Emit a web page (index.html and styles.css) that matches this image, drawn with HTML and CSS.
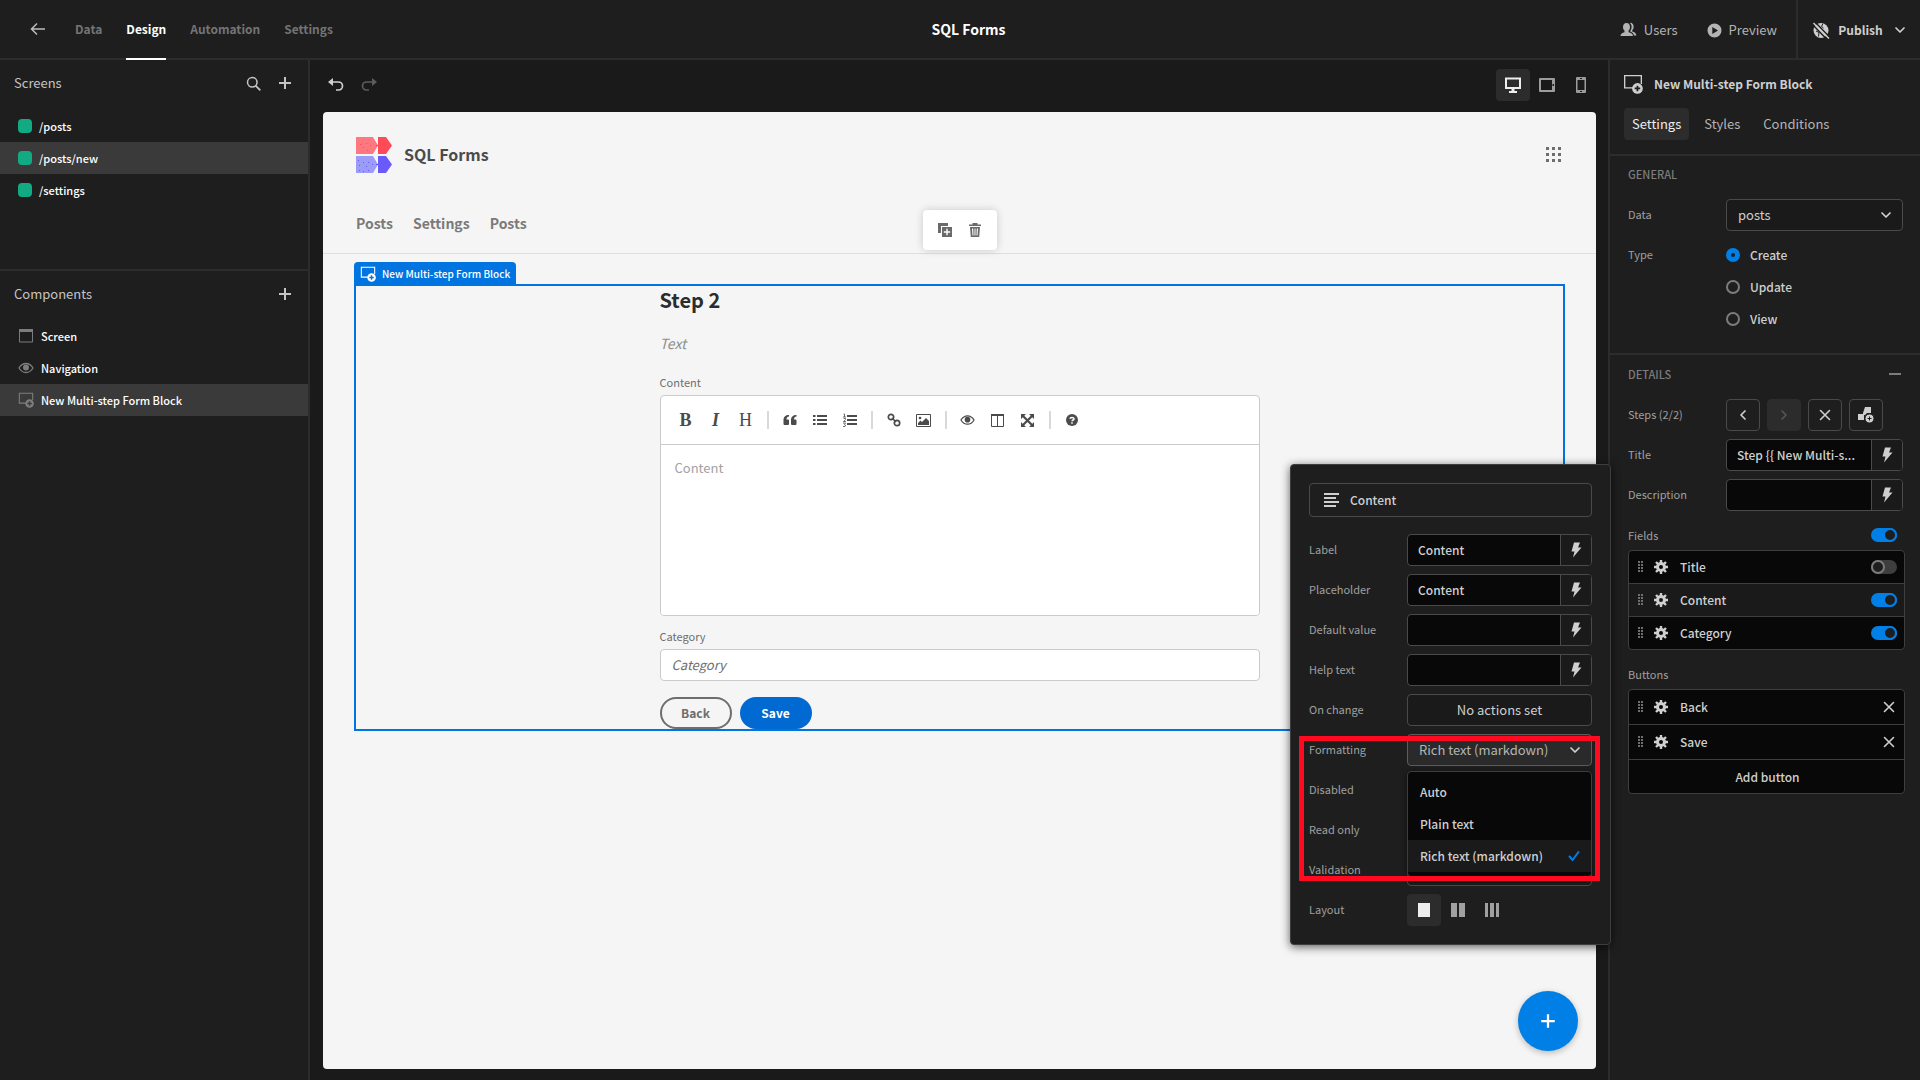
FILE: index.html
```html
<!DOCTYPE html>
<html lang="en">
<head>
<meta charset="utf-8">
<meta name="viewport" content="width=device-width, initial-scale=1">
<title>SQL Forms - Design</title>
<link rel="stylesheet" href="styles.css">
</head>
<body>
<svg class="defs" aria-hidden="true">
  <symbol id="plus" viewBox="0 0 16 16"><path d="M8 2v12M2 8h12" fill="none" stroke="currentColor" stroke-width="2"/></symbol>
  <symbol id="cross" viewBox="0 0 12 12"><path d="M1.5 1.5l9 9M10.5 1.5l-9 9" fill="none" stroke="currentColor" stroke-width="1.6" stroke-linecap="round"/></symbol>
  <symbol id="chevron" viewBox="0 0 12 12"><path d="M2 4l4 4 4-4" fill="none" stroke="currentColor" stroke-width="1.7" stroke-linecap="round" stroke-linejoin="round"/></symbol>
  <symbol id="bolt" viewBox="0 0 12 16"><path d="M4 .5h6L8 5.500h3.500L3 15.500l1.500-6H1.500z" fill="currentColor"/></symbol>
  <symbol id="block" viewBox="0 0 18 18"><path d="M9 12.500H1.500v-11h15V9" fill="none" stroke="currentColor" stroke-width="1.200"/><circle cx="13" cy="13" r="4.800" fill="currentColor"/><path class="knock" d="M13 10.500v5M10.500 13h5" fill="none" stroke-width="1.600"/></symbol>
  <symbol id="gear" viewBox="0 0 16 16"><g stroke="currentColor" stroke-width="2.400"><path d="M8 1v14M1 8h14M3 3l10 10M13 3L3 13"/></g><circle cx="8" cy="8" r="5" fill="currentColor"/><circle class="hole" cx="8" cy="8" r="2"/></symbol>
  <symbol id="grip" viewBox="0 0 6 12"><path d="M0 0h2v2H0zM3 0h2v2H3zM0 3h2v2H0zM3 3h2v2H3zM0 6h2v2H0zM3 6h2v2H3zM0 9h2v2H0zM3 9h2v2H3z" fill="currentColor"/></symbol>
  <symbol id="eye" viewBox="0 0 16 12"><path d="M1 6c1.800-3 4.200-4.500 7-4.500S13.200 3 15 6c-1.800 3-4.200 4.500-7 4.500S2.800 9 1 6z" fill="none" stroke="currentColor" stroke-width="1.300"/><circle cx="8" cy="5.600" r="3" fill="currentColor"/></symbol>
</svg>

<header class="topbar">
  <nav class="topnav" aria-label="Sections">
    <a class="back" href="#" aria-label="Back"><svg width="16" height="14" viewBox="0 0 16 14"><path d="M7 1.500L1.500 7 7 12.500M1.500 7H15" fill="none" stroke="currentColor" stroke-width="1.500"/></svg></a>
    <a href="#">Data</a><a class="current" href="#">Design</a><a href="#">Automation</a><a href="#">Settings</a>
  </nav>
  <h1>SQL Forms</h1>
  <div class="topactions">
    <button class="act"><svg width="17" height="16" viewBox="0 0 17 16"><path d="M6.500 1C9 1 10 2.700 10 5c0 1.700-.7 2.800-1.400 3.600v1.600c2.400.6 4.400 1.400 4.400 3.800H.5c0-2.400 1.900-3.200 4-3.800V8.600C3.700 7.800 3 6.700 3 5c0-2.300 1.100-4 3.500-4z" fill="currentColor"/><path d="M10.300.8c2.200 0 3.300 1.700 3.300 3.900 0 1.700-.6 2.800-1.400 3.500v1.200c2.200.6 4 1.600 4.200 4.200H14c-.2-2-1.600-3.200-3.600-3.900V8.500c.8-1 1.200-2.100 1.200-3.500 0-1.800-.5-3.200-1.800-4.100z" fill="currentColor"/></svg>Users</button>
    <button class="act"><svg width="15" height="15" viewBox="0 0 15 15"><path fill-rule="evenodd" d="M7.500.5a7 7 0 110 14 7 7 0 010-14zM5.300 4v7l5.700-3.500z" fill="currentColor"/></svg>Preview</button>
    <button class="publish"><svg width="18" height="17" viewBox="0 0 18 17"><circle cx="9" cy="8.500" r="7.500" fill="currentColor"/><path d="M11 1.500l-1.500 3 2 1.500M4 9l3 1.500-.5 4" fill="none" stroke="#1e1e1e"/><path d="M.5 2.500L15 17.500M3 0l15 15.500" stroke="#1e1e1e" stroke-width="1.500"/><path d="M1.500 1L17 16.500" stroke="currentColor" stroke-width="1.500"/></svg>Publish<svg width="12" height="12"><use href="#chevron"/></svg></button>
  </div>
</header>

<div class="workspace">
  <aside class="left">
    <section class="screens">
      <header><h2>Screens</h2>
        <button aria-label="Search"><svg width="15" height="15" viewBox="0 0 15 15"><circle cx="6.300" cy="6.300" r="4.800" fill="none" stroke="currentColor" stroke-width="1.500"/><path d="M9.800 9.800l4 4" stroke="currentColor" stroke-width="1.800" stroke-linecap="round"/></svg></button>
        <button aria-label="Add screen"><svg width="16" height="16"><use href="#plus"/></svg></button></header>
      <ul>
        <li><a href="#"><i class="dot"></i>/posts</a></li>
        <li><a class="selected" href="#"><i class="dot"></i>/posts/new</a></li>
        <li><a href="#"><i class="dot"></i>/settings</a></li>
      </ul>
    </section>
    <section class="components">
      <header><h2>Components</h2>
        <button aria-label="Add component"><svg width="16" height="16"><use href="#plus"/></svg></button></header>
      <ul>
        <li><a href="#"><svg width="16" height="14" viewBox="0 0 16 14"><path d="M1.500 1v12h13V1" fill="none" stroke="currentColor"/><path d="M1 0h14v3H1z" fill="currentColor"/></svg>Screen</a></li>
        <li><a href="#"><svg width="16" height="12"><use href="#eye"/></svg>Navigation</a></li>
        <li><a class="selected" href="#"><svg width="16" height="16"><use href="#block"/></svg>New Multi-step Form Block</a></li>
      </ul>
    </section>
  </aside>

  <main>
    <div class="toolbar">
      <button aria-label="Undo"><svg width="16" height="14" viewBox="0 0 16 14"><path d="M2 4h8.500a4 4 0 010 8H8" fill="none" stroke="currentColor" stroke-width="1.700"/><path d="M5 0v8L0 4z" fill="currentColor"/></svg></button>
      <button class="dim" aria-label="Redo"><svg width="16" height="14" viewBox="0 0 16 14"><path d="M14 4H5.500a4 4 0 000 8H8" fill="none" stroke="currentColor" stroke-width="1.700"/><path d="M11 0v8l5-4z" fill="currentColor"/></svg></button>
      <div class="devices">
        <button class="on" aria-label="Desktop"><svg width="16" height="16" viewBox="0 0 16 16"><path d="M1 1.500h14v9.500H1z" fill="none" stroke="currentColor" stroke-width="2"/><path d="M6.500 11h3v3H12v2H4v-2h2.500z" fill="currentColor"/></svg></button>
        <button aria-label="Tablet"><svg width="16" height="14" viewBox="0 0 16 14"><path fill-rule="evenodd" d="M1 0h14a1 1 0 011 1v12a1 1 0 01-1 1H1a1 1 0 01-1-1V1a1 1 0 011-1zm1 2v10h11V2zm11.500 4v2H15V6z" fill="currentColor"/></svg></button>
        <button aria-label="Phone"><svg width="10" height="16" viewBox="0 0 10 16"><path fill-rule="evenodd" d="M1 0h8a1 1 0 011 1v14a1 1 0 01-1 1H1a1 1 0 01-1-1V1a1 1 0 011-1zm.5 3v10h7V3zM4 1v1h2V1zm0 13v1h2v-1z" fill="currentColor"/></svg></button>
      </div>
    </div>
    <div class="canvas">
      <header class="apphead">
        <div class="brand">
          <svg width="36" height="36" viewBox="0 0 36 36"><path d="M0 0h17l5 8.500-5 8.500H0z" fill="#ff7880"/><path d="M22 0h8l6 8.500-6 8.500h-8z" fill="#ff4a57"/><path d="M0 19h17l5 8.500-5 8.500H0z" fill="#9a9cf8"/><path d="M22 19h8l6 8.500-6 8.500h-8z" fill="#6a5af9"/><path d="M4 7h1v1H4zM10 6h1v1h-1zM14 8h1v1h-1zM7 10h1v1H7zM11 13h1v1h-1zM20 8h2v1h-2z" fill="#ff4a57"/><path d="M2 23h1v1H2zM7 25h1v1H7zM12 25h1v1h-1zM3 28h1v1H3zM10 29h1v1h-1zM16 27h1v1h-1zM3 33h1v1H3zM7 34h1v1H7zM12 33h1v1h-1zM20 27h2v1h-2z" fill="#6a5af9"/></svg>
          <strong>SQL Forms</strong>
          <button aria-label="Apps"><svg width="16" height="16" viewBox="0 0 16 16"><path d="M0 0h3v3H0zM6 0h3v3H6zM12 0h3v3h-3zM0 6h3v3H0zM6 6h3v3H6zM12 6h3v3h-3zM0 12h3v3H0zM6 12h3v3H6zM12 12h3v3h-3z" fill="currentColor"/></svg></button>
        </div>
        <nav aria-label="App"><a href="#">Posts</a><a href="#">Settings</a><a href="#">Posts</a></nav>
      </header>
      <div class="floatbar">
        <button aria-label="Duplicate"><svg width="14" height="14" viewBox="0 0 14 14"><path d="M0 0h10v3H3v7H0z" fill="currentColor"/><path fill-rule="evenodd" d="M4 4h10v10H4zm4.300 1.800v2.500H5.800v1.400h2.500v2.500h1.400V9.700h2.500V8.300H9.700V5.800z" fill="currentColor"/></svg></button>
        <button aria-label="Delete"><svg width="14" height="14" viewBox="0 0 14 14"><path fill-rule="evenodd" d="M4.500 0h5v1.500H13V3H1V1.500h3.500zM2 4h10l-.8 10H2.800zm2 1.500l.5 7h1l-.3-7zm2.500 0v7h1v-7zm2.300 0l-.3 7h1l.5-7z" fill="currentColor"/></svg></button>
      </div>
      <div class="formblock">
        <span class="tag"><svg width="16" height="16"><use href="#block"/></svg>New Multi-step Form Block</span>
        <form class="form">
          <h2>Step 2</h2>
          <p>Text</p>
          <label for="body">Content</label>
          <div class="editor">
            <div class="edbar">
              <button type="button" class="ser"><b>B</b></button><button type="button" class="ser"><b><em>I</em></b></button><button type="button" class="ser">H</button><span class="sep"></span>
              <button type="button" aria-label="Quote"><svg width="14" height="14" viewBox="0 0 14 14"><path d="M6 2v1.500C4.500 3.500 3.500 4.500 3.500 6.500H5a1 1 0 011 1V11a1 1 0 01-1 1H1.500a1 1 0 01-1-1V7C.5 4 2.500 2 6 2zM13.500 2v1.500c-1.500 0-2.500 1-2.500 3h1.500a1 1 0 011 1V11a1 1 0 01-1 1H9a1 1 0 01-1-1V7c0-3 2-5 5.500-5z" fill="currentColor"/></svg></button>
              <button type="button" aria-label="Bulleted list"><svg width="14" height="14" viewBox="0 0 14 14"><path d="M4 2h10v2H4zM4 6h10v2H4zM4 10h10v2H4z" fill="currentColor"/><path d="M0 2h2.500v2H0zM0 6h2.500v2H0zM0 10h2.500v2H0z" fill="currentColor"/></svg></button>
              <button type="button" aria-label="Numbered list"><svg width="14" height="14" viewBox="0 0 14 14"><path d="M4 2h10v2H4zM4 6h10v2H4zM4 10h10v2H4z" fill="currentColor"/><path d="M.5 1h1v3M0 4h3M.5 5.500h2v1L.5 8.500h2.500M0 10h2.500l-1 1.500 1 .5-.5 1.500H0" fill="none" stroke="currentColor" stroke-width=".8"/></svg></button><span class="sep"></span>
              <button type="button" aria-label="Link"><svg width="14" height="14" viewBox="0 0 14 14"><g fill="none" stroke="currentColor" stroke-width="1.700"><circle cx="4" cy="4" r="2.700"/><circle cx="10" cy="10" r="2.700"/><path d="M5 5l4 4"/></g></svg></button>
              <button type="button" aria-label="Image"><svg width="15" height="13" viewBox="0 0 15 13"><path d="M.5.5h14v12H.5z" fill="none" stroke="currentColor"/><path d="M2 11V9l2.500-2.500L6 8l4-4 3 3v4z" fill="currentColor"/><circle cx="4" cy="4" r="1.300" fill="currentColor"/></svg></button><span class="sep"></span>
              <button type="button" aria-label="Preview"><svg width="15" height="12"><use href="#eye"/></svg></button>
              <button type="button" aria-label="Side by side"><svg width="13" height="13" viewBox="0 0 13 13"><path d="M.5 1h12v11.500H.5zM6.500 1v11.500" fill="none" stroke="currentColor"/><path d="M0 0h13v2H0z" fill="currentColor"/></svg></button>
              <button type="button" aria-label="Fullscreen"><svg width="13" height="13" viewBox="0 0 13 13"><path d="M0 0h5L0 5zM13 0v5L8 0zM0 13V8l5 5zM13 13H8l5-5z" fill="currentColor"/><path d="M2 2l9 9M11 2l-9 9" stroke="currentColor" stroke-width="2.200"/></svg></button><span class="sep"></span>
              <button type="button" aria-label="Help"><svg width="12" height="12" viewBox="0 0 12 12"><circle cx="6" cy="6" r="6" fill="currentColor"/><path d="M4 4.700C4 3.300 8 3 8 4.900 8 6 6 6 6 7.300M6 8.300v1.500" fill="none" stroke="#fff" stroke-width="1.500"/></svg></button>
            </div>
            <textarea id="body" placeholder="Content"></textarea>
          </div>
          <label for="cat">Category</label>
          <input id="cat" placeholder="Category">
          <div class="formbtns"><button type="button" class="outline">Back</button><button type="button" class="solid">Save</button></div>
        </form>
      </div>
      <button class="fab" aria-label="Add"><svg width="18" height="18"><use href="#plus"/></svg></button>
    </div>
  </main>

  <aside class="right">
    <header class="rhead"><svg width="20" height="20"><use href="#block"/></svg><h2>New Multi-step Form Block</h2></header>
    <div class="tabs"><button class="on">Settings</button><button>Styles</button><button>Conditions</button></div>
    <section>
      <h3>GENERAL</h3>
      <div class="row"><label for="data">Data</label><div class="select"><select id="data"><option>posts</option></select><svg width="12" height="12"><use href="#chevron"/></svg></div></div>
      <div class="row" role="radiogroup" aria-labelledby="type"><span class="lab" id="type">Type</span>
        <div class="radios"><label><input type="radio" name="type" checked>Create</label><label><input type="radio" name="type">Update</label><label><input type="radio" name="type">View</label></div></div>
    </section>
    <section>
      <h3>DETAILS<svg width="12" height="2" viewBox="0 0 12 2"><path d="M0 0h12v2H0z" fill="currentColor"/></svg></h3>
      <div class="row"><span class="lab">Steps (2/2)</span><div class="steps">
        <button aria-label="Previous step"><svg class="prev" width="12" height="12"><use href="#chevron"/></svg></button>
        <button aria-label="Next step" disabled><svg class="next" width="12" height="12"><use href="#chevron"/></svg></button>
        <button aria-label="Remove step"><svg width="12" height="12"><use href="#cross"/></svg></button>
        <button aria-label="Add step"><svg width="16" height="16" viewBox="0 0 16 16"><path d="M0 7h6v6H0zM7 0h6v6H9L7 8H5V6z" fill="currentColor"/><circle cx="11.500" cy="11.500" r="4.500" fill="currentColor" stroke="#1e1e1e"/><path d="M11.500 9.500v4M9.500 11.500h4" stroke="#1e1e1e"/></svg></button></div></div>
      <div class="row"><label for="title">Title</label><div class="bind"><input id="title" value="Step {{ New Multi-s..."><button aria-label="Bind title"><svg width="12" height="16"><use href="#bolt"/></svg></button></div></div>
      <div class="row"><label for="desc">Description</label><div class="bind"><input id="desc"><button aria-label="Bind description"><svg width="12" height="16"><use href="#bolt"/></svg></button></div></div>
      <div class="listhead"><label for="all">Fields</label><input id="all" class="switch" type="checkbox" checked></div>
      <ul class="list">
        <li><svg class="grip" width="6" height="12"><use href="#grip"/></svg><svg width="16" height="16"><use href="#gear"/></svg><label for="f1">Title</label><input id="f1" class="switch" type="checkbox"></li>
        <li class="hot"><svg class="grip" width="6" height="12"><use href="#grip"/></svg><svg width="16" height="16"><use href="#gear"/></svg><label for="f2">Content</label><input id="f2" class="switch" type="checkbox" checked></li>
        <li><svg class="grip" width="6" height="12"><use href="#grip"/></svg><svg width="16" height="16"><use href="#gear"/></svg><label for="f3">Category</label><input id="f3" class="switch" type="checkbox" checked></li>
      </ul>
      <div class="listhead"><span class="lab">Buttons</span></div>
      <ul class="list tall">
        <li><svg class="grip" width="6" height="12"><use href="#grip"/></svg><svg width="16" height="16"><use href="#gear"/></svg><span>Back</span><button aria-label="Remove Back"><svg width="12" height="12"><use href="#cross"/></svg></button></li>
        <li><svg class="grip" width="6" height="12"><use href="#grip"/></svg><svg width="16" height="16"><use href="#gear"/></svg><span>Save</span><button aria-label="Remove Save"><svg width="12" height="12"><use href="#cross"/></svg></button></li>
        <li><button class="add">Add button</button></li>
      </ul>
    </section>

    <div class="popover" role="dialog" aria-label="Content settings">
      <div class="pophead"><svg width="15" height="14" viewBox="0 0 15 14"><path d="M0 0h15v2H0zM0 4h12v2H0zM0 8h15v2H0zM0 12h12v2H0z" fill="currentColor"/></svg>Content</div>
      <div class="row"><label for="p1">Label</label><div class="bind"><input id="p1" value="Content"><button aria-label="Bind label"><svg width="12" height="16"><use href="#bolt"/></svg></button></div></div>
      <div class="row"><label for="p2">Placeholder</label><div class="bind"><input id="p2" value="Content"><button aria-label="Bind placeholder"><svg width="12" height="16"><use href="#bolt"/></svg></button></div></div>
      <div class="row"><label for="p3">Default value</label><div class="bind"><input id="p3"><button aria-label="Bind default value"><svg width="12" height="16"><use href="#bolt"/></svg></button></div></div>
      <div class="row"><label for="p4">Help text</label><div class="bind"><input id="p4"><button aria-label="Bind help text"><svg width="12" height="16"><use href="#bolt"/></svg></button></div></div>
      <div class="row"><span class="lab">On change</span><button class="wide">No actions set</button></div>
      <div class="row"><label for="p5">Formatting</label><div class="select open"><select id="p5"><option>Rich text (markdown)</option></select><svg width="12" height="12"><use href="#chevron"/></svg>
        <ul class="menu" role="listbox"><li role="option">Auto</li><li role="option">Plain text</li><li role="option" class="picked" aria-selected="true">Rich text (markdown)<svg width="12" height="12" viewBox="0 0 12 12"><path d="M1.500 6.500l3 3.500L10.500 2" fill="none" stroke="currentColor" stroke-width="2" stroke-linecap="round"/></svg></li></ul></div></div>
      <div class="row"><span class="lab">Disabled</span></div>
      <div class="row"><span class="lab">Read only</span></div>
      <div class="row"><span class="lab">Validation</span><button class="wide" aria-label="Validation rules"></button></div>
      <div class="row"><span class="lab">Layout</span><div class="layouts">
        <button class="on" aria-label="One column"><svg width="12" height="14"><path d="M0 0h12v14H0z" fill="currentColor"/></svg></button>
        <button aria-label="Two columns"><svg width="14" height="14"><path d="M0 0h6v14H0zM8 0h6v14H8z" fill="currentColor"/></svg></button>
        <button aria-label="Three columns"><svg width="14" height="14"><path d="M0 0h3v14H0zM5 0h4v14H5zM11 0h3v14h-3z" fill="currentColor"/></svg></button></div></div>
      <div class="highlight"></div>
    </div>
  </aside>
</div>
</body>
</html>
```
FILE: styles.css
```css
:root {
  --panel: #1e1e1e;
  --stage: #1a1a1a;
  --line: #2c2c2c;
  --edge: #4a4a4a;
  --field: #080808;
  --text: #cfcfcf;
  --muted: #a0a0a0;
  --blue: #0080e6;
}
*, *::before { box-sizing: border-box; }
body {
  margin: 0;
  min-height: 100vh;
  display: flex;
  flex-direction: column;
  background: var(--panel);
  color: var(--text);
  font: 400 13px/20px "Noto Sans CJK SC", "Noto Sans", sans-serif;
}
.defs { position: absolute; width: 0; height: 0; }
svg { flex: none; display: block; }
button, input, select, textarea { font: inherit; color: inherit; }
button { border: 0; padding: 0; background: none; display: flex; align-items: center; justify-content: center; }
a { color: inherit; text-decoration: none; }
h1, h2, h3, p, ul { margin: 0; padding: 0; }
ul { list-style: none; }
.knock { stroke: var(--panel); }
.hole { fill: var(--field); }

/* Top bar */
.topbar {
  display: grid;
  grid-template-columns: 1fr auto 1fr;
  height: 60px;
  border-bottom: 2px solid var(--line);
}
.topnav { display: flex; gap: 24px; padding-left: 30px; font-size: 12px; font-weight: 700; color: #747474; }
.topnav a { display: flex; align-items: center; height: 60px; border-bottom: 2px solid transparent; }
.topnav .back { color: #bdbdbd; margin-right: 5px; }
.topnav .current { color: #fff; border-color: #fff; }
h1 { padding-left: 17px; font-size: 14px; line-height: 58px; font-weight: 700; color: #fff; }
.topactions { display: flex; justify-content: flex-end; }
.act { gap: 7px; margin-right: 29px; color: #b4b4b4; }
.act + .act { margin-right: 19px; }
.publish { gap: 8px; width: 124px; border-left: 2px solid var(--line); font-size: 12px; font-weight: 700; }
.publish svg:last-child { margin-left: 3px; }

.workspace { flex: 1; display: flex; }

/* Left panel */
.left { width: 310px; border-right: 2px solid var(--line); color: #c4c4c4; }
.screens { height: 211px; border-bottom: 2px solid var(--line); }
.left header { display: flex; align-items: center; gap: 16px; height: 46px; padding: 0 15px 0 14px; margin-bottom: 4px; }
.left .components header { margin-bottom: 3px; }
.left h2 { flex: 1; font-size: 13px; font-weight: 400; }
.left a { display: flex; align-items: center; gap: 7px; height: 32px; padding-left: 18px; font-size: 11px; font-weight: 500; color: #fff; }
.left a svg { color: #7d7d7d; }
.left .selected { background: #3a3a3a; }
.components .selected { --panel: #3a3a3a; }
.dot { width: 14px; height: 14px; border-radius: 4px; background: #11aa83; }

/* Canvas */
main { flex: 1; display: flex; flex-direction: column; padding-bottom: 11px; background: var(--stage); }
.toolbar { display: flex; align-items: center; gap: 17px; height: 50px; padding: 0 10px 0 18px; margin-bottom: 2px; }
.toolbar .dim { color: #5c5c5c; }
.devices { display: flex; margin-left: auto; color: #9c9c9c; }
.devices button, .layouts button { width: 34px; height: 32px; border-radius: 4px; }
.devices .on, .layouts .on { background: #2c2c2c; color: #eee; }
.canvas { position: relative; flex: 1; margin: 0 12px 0 13px; border-radius: 4px; background: #f5f5f5; color: #4b4b4b; }
.apphead { padding: 20px 34px 0 33px; height: 142px; border-bottom: 1px solid #dedede; }
.brand { display: flex; align-items: center; gap: 12px; height: 46px; }
.brand strong { flex: 1; padding-bottom: 2px; font-size: 16px; }
.brand button { color: #6e6e6e; }
.apphead nav { display: flex; gap: 20px; padding-top: 35px; font-size: 14px; font-weight: 700; color: #7a7a7a; }
.floatbar {
  position: absolute; top: 98px; left: 50%; transform: translateX(-50%);
  display: flex; align-items: center; justify-content: center; gap: 16px;
  width: 74px; height: 40px; border-radius: 4px; background: #fff; color: #6a6a6a;
  box-shadow: 0 0 8px #0000002e;
}
.formblock { position: relative; margin: 30px 31px 0; border: 2px solid #0074e0; height: 447px; }
.tag {
  position: absolute; left: -2px; bottom: 100%;
  display: flex; align-items: center; gap: 6px; height: 24px; padding: 0 6px;
  border-radius: 4px 4px 0 0; background: #0074e0; color: #fff; font-size: 10px; font-weight: 500;
  --panel: #0074e0;
}
.form { max-width: 600px; margin: 0 auto; display: flex; flex-direction: column; }
.form h2 { font-size: 20px; line-height: 28px; font-weight: 700; color: #2c2c2c; }
.form p { margin: 19px 0 16px; font-size: 14px; line-height: 20px; font-style: italic; color: #8e8e8e; }
.form label { font-size: 11px; line-height: 26px; color: #6e6e6e; }
.editor { border: 1px solid #cacaca; border-radius: 4px; background: #fff; height: 221px; display: flex; flex-direction: column; overflow: hidden; }
.edbar { display: flex; align-items: center; height: 49px; padding-left: 10px; border-bottom: 1px solid #cacaca; color: #4b4b4b; }
.edbar button { width: 30px; height: 30px; }
.edbar .ser { font: 18px/30px "Liberation Serif", serif; }
.sep { width: 2px; height: 18px; margin: 0 6px; background: #d9d9d9; }
.editor textarea { flex: 1; border: 0; padding: 13px 14px; resize: none; outline: 0; }
.editor textarea::placeholder { color: #a2a2a2; opacity: 1; }
.editor + label { margin-top: 7px; }
#cat { height: 32px; padding: 0 11px 2px; border: 1px solid #cacaca; border-radius: 4px; background: #fff; }
#cat::placeholder { color: #6e6e6e; font-style: italic; opacity: 1; }
.formbtns { display: flex; gap: 8px; margin-top: 16px; }
.formbtns button { width: 72px; height: 32px; border-radius: 16px; font-size: 12px; font-weight: 700; }
.outline { border: 2px solid #6e6e6e; color: #6e6e6e; }
.solid { background: #0069d2; color: #fff; }
.fab { position: absolute; right: 18px; bottom: 18px; width: 60px; height: 60px; border-radius: 50%; background: var(--blue); color: #fff; box-shadow: 0 2px 6px #00000040; }

/* Right panel */
.right { position: relative; width: 312px; border-left: 2px solid var(--line); }
.rhead { display: flex; align-items: center; gap: 11px; height: 48px; padding-left: 13px; }
.rhead h2 { font-size: 12px; font-weight: 700; }
.tabs { display: flex; height: 48px; padding-left: 14px; border-bottom: 2px solid var(--line); color: #b4b4b4; }
.tabs button { height: 32px; padding: 0 8px; border-radius: 4px; }
.tabs button + button { margin-left: 7px; }
.tabs .on { background: #2c2c2c; color: #eee; }
.right section { display: flex; flex-direction: column; gap: 8px; padding: 0 17px 18px 18px; }
.right section + section { padding-top: 1px; border-top: 2px solid var(--line); }
h3 { display: flex; align-items: center; justify-content: space-between; height: 35px; padding-right: 2px; font-size: 11px; font-weight: 500; color: #7c7c7c; }
.row { display: grid; grid-template-columns: 98px minmax(0, 1fr); min-height: 32px; }
.row > label, .lab, .listhead label { font-size: 11px; line-height: 30px; color: var(--muted); }
.select { position: relative; }
.select select { appearance: none; width: 100%; height: 32px; padding: 0 11px; border: 1px solid var(--edge); border-radius: 4px; background: var(--stage); }
.select > svg { position: absolute; right: 11px; top: 10px; pointer-events: none; }
.radios label { display: flex; align-items: center; gap: 10px; height: 32px; font-size: 12px; font-weight: 500; }
input[type="radio"] { appearance: none; width: 14px; height: 14px; margin: 0; border: 2px solid #7c7c7c; border-radius: 50%; }
input[type="radio"]:checked { border: 5px solid var(--blue); }
.steps { display: flex; gap: 7px; }
.steps button { width: 34px; height: 32px; border: 1px solid var(--edge); border-radius: 4px; }
.steps button:disabled { border-color: #2c2c2c; background: #2c2c2c; color: #555; }
.prev { transform: rotate(90deg); }
.next { transform: rotate(-90deg); }
.bind { display: flex; height: 32px; border: 1px solid var(--edge); border-radius: 4px; background: var(--field); overflow: hidden; }
.bind input { flex: 1; min-width: 0; padding: 0 10px; border: 0; background: none; outline: 0; font-size: 12px; font-weight: 500; }
.bind button { width: 31px; border-left: 1px solid var(--edge); background: var(--stage); }
.listhead { display: flex; align-items: center; justify-content: space-between; height: 31px; padding-right: 6px; margin-bottom: -8px; }
.switch { appearance: none; position: relative; width: 26px; height: 14px; margin: 0; border-radius: 7px; background: #3e3e3e; }
.switch::before { content: ""; position: absolute; left: 0; top: 0; width: 14px; height: 14px; border: 2px solid #7c7c7c; border-radius: 50%; background: var(--panel); }
.switch:checked { background: var(--blue); }
.switch:checked::before { left: 12px; border-color: var(--blue); }
.list { margin-right: -2px; border: 1px solid #3e3e3e; border-radius: 4px; background: var(--field); overflow: hidden; font-size: 12px; font-weight: 500; }
.list li { display: flex; align-items: center; height: 32px; padding: 0 7px 0 9px; }
.list li + li { height: 33px; border-top: 1px solid #3e3e3e; }
.list .hot { background: var(--stage); --field: #1a1a1a; }
.list .grip { margin-right: 9px; color: #6e6e6e; }
.list li label, .list li span { flex: 1; margin-left: 11px; }
.list button { width: 16px; }
.list.tall li { height: 34px; }
.list.tall li:nth-child(2) { height: 35px; }
.list .add { width: 100%; font-weight: 500; }

/* Field settings popover */
.popover {
  position: absolute; right: 309px; top: 404px; width: 321px;
  display: flex; flex-direction: column; gap: 8px; padding: 18px;
  border: 1px solid #3e3e3e; border-radius: 4px; background: var(--panel); box-shadow: 0 2px 10px #000000a0;
}
.pophead { display: flex; align-items: center; gap: 11px; height: 34px; margin-bottom: 9px; padding-left: 14px; border: 1px solid var(--edge); border-radius: 4px; font-size: 12px; font-weight: 500; }
.wide { border: 1px solid var(--edge); border-radius: 4px; background: var(--stage); }
.select.open select { background: #2a2a2a; border-color: #5c5c5c; color: #b4b4b4; }
.menu { position: absolute; z-index: 1; top: 37px; left: 0; right: 0; padding: 4px 0; border: 1px solid #3e3e3e; border-radius: 4px; background: var(--field); box-shadow: 0 1px 6px #00000080; font-size: 12px; font-weight: 500; }
.menu li { display: flex; align-items: center; justify-content: space-between; height: 32px; padding: 0 11px 0 12px; }
.menu .picked { background: var(--stage); }
.menu svg { color: var(--blue); }
.layouts { display: flex; color: #a0a0a0; }
.highlight { position: absolute; z-index: 2; left: 8px; right: 10px; top: 271px; height: 145px; border: 5px solid #ff0a20; pointer-events: none; }
```
